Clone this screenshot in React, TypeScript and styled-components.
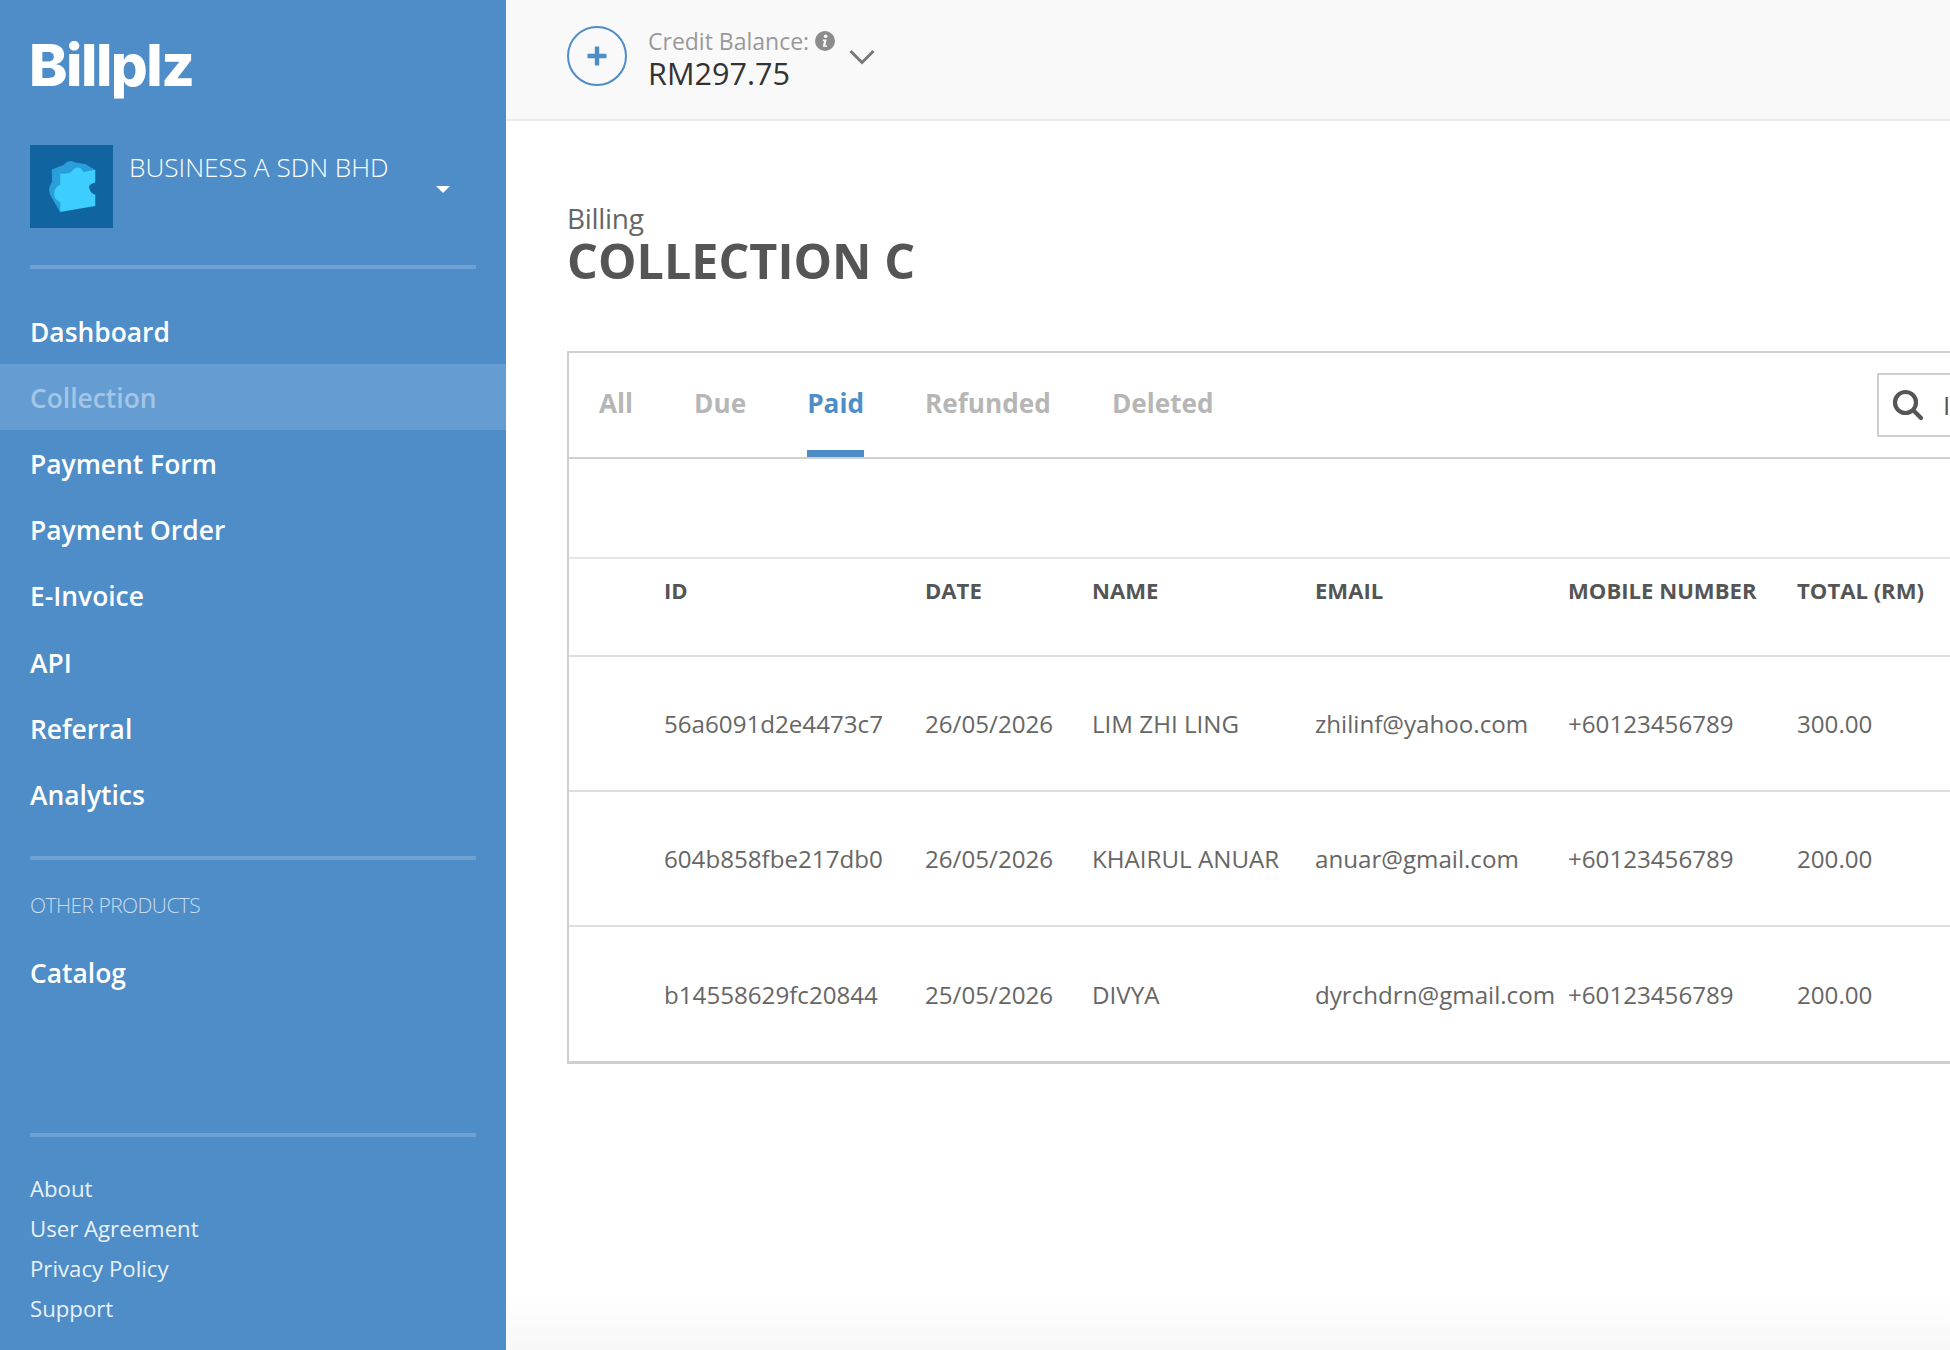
import React from "react";
import styled, { createGlobalStyle } from "styled-components";

const Global = createGlobalStyle`
  html, body { margin: 0; padding: 0; height: 1350px; overflow: hidden; background: #fff; }
  body { font-family: "Open Sans", "Noto Sans", sans-serif; }
  #root { height: 1350px; }
`;

const Page = styled.div`
  display: flex;
  width: 1950px;
  height: 1350px;
  overflow: hidden;
`;

const Sidebar = styled.aside`
  flex: 0 0 506px;
  height: 1350px;
  background: #4e8dc7;
  display: flex;
  flex-direction: column;
  color: #fff;
`;

const LogoRow = styled.div`
  height: 145px;
  padding: 27px 0 0 29px;
  box-sizing: border-box;
`;

const Logo = styled.div`
  font-family: "Inter", sans-serif;
  font-weight: 800;
  font-size: 58px;
  line-height: 76px;
  letter-spacing: -1.5px;
  color: #fff;
`;

const Account = styled.div`
  display: flex;
  height: 83px;
  padding: 0 30px;
  position: relative;
`;

const Avatar = styled.div`
  flex: 0 0 83px;
  height: 83px;
  background: #10649f;
`;

const AccountName = styled.div`
  margin: 8px 0 0 16px;
  font-size: 26.2px;
  line-height: 28px;
  font-weight: 300;
`;

const Caret = styled.div`
  position: absolute;
  left: 436px;
  top: 41px;
  width: 0;
  height: 0;
  border-left: 7.5px solid transparent;
  border-right: 7.5px solid transparent;
  border-top: 7px solid #fff;
`;

const Divider = styled.div<{ $top: number }>`
  height: 4px;
  margin: ${(p) => p.$top}px 30px 0;
  background: #6ea2d5;
  flex: none;
`;

const Nav = styled.nav<{ $top: number }>`
  margin-top: ${(p) => p.$top}px;
  display: flex;
  flex-direction: column;
`;

const NavItem = styled.a<{ $active?: boolean }>`
  height: 66.2px;
  box-sizing: border-box;
  display: flex;
  align-items: center;
  padding: 1px 0 0 30px;
  font-size: 26.4px;
  font-weight: 600;
  color: ${(p) => (p.$active ? "#a3c6e6" : "#fff")};
  background: ${(p) => (p.$active ? "#659dd2" : "transparent")};
`;

const SectionLabel = styled.div`
  margin: 31px 0 0 30px;
  font-size: 21px;
  line-height: 28px;
  font-weight: 300;
  letter-spacing: -0.55px;
  color: #c6dcf0;
`;

const Footer = styled.div`
  margin-top: auto;
  padding-bottom: 21px;
`;

const FooterLinks = styled.div`
  margin-top: 31px;
  display: flex;
  flex-direction: column;
`;

const FooterLink = styled.a`
  height: 40.2px;
  display: flex;
  align-items: center;
  padding-left: 30px;
  font-size: 22.2px;
  font-weight: 400;
  color: #e8f1f9;
`;

const Main = styled.main`
  flex: 1;
  min-width: 0;
  height: 1350px;
  background: linear-gradient(to bottom, #fff 96%, #f7f7f7 100%);
  display: flex;
  flex-direction: column;
`;

const TopBar = styled.header`
  flex: none;
  height: 119px;
  background: #f9f9f9;
  border-bottom: 2px solid #ececec;
  display: flex;
  align-items: center;
  padding-left: 61px;
`;

const AddButton = styled.div`
  width: 60px;
  height: 60px;
  box-sizing: border-box;
  border: 2px solid #4e8dc7;
  border-radius: 50%;
  display: flex;
  align-items: center;
  justify-content: center;
  color: #4e8dc7;
  margin-top: -8px;
`;

const Balance = styled.div`
  margin: 0 0 0 21px;
  display: flex;
  flex-direction: column;
`;

const BalanceLabel = styled.div`
  display: flex;
  align-items: center;
  gap: 6px;
  font-size: 23px;
  line-height: 28px;
  color: #999;
`;

const BalanceValue = styled.div`
  font-size: 30.6px;
  line-height: 37px;
  font-weight: 500;
  color: #333;
`;

const Chevron = styled.svg`
  margin: -6px 0 0 14px;
`;

const Content = styled.div`
  padding: 0 0 0 61px;
  flex: 1;
  min-height: 0;
`;

const Crumb = styled.div`
  margin-top: 78px;
  font-size: 28px;
  line-height: 38px;
  color: #666;
  letter-spacing: -0.3px;
`;

const Title = styled.h1`
  margin: -8px 0 0;
  font-size: 48.5px;
  line-height: 62px;
  font-weight: 700;
  color: #555;
`;

const Card = styled.section`
  margin-top: 60px;
  width: 1500px;
  box-sizing: border-box;
  border: 2px solid #cfcfcf;
  border-bottom-width: 3px;
  border-right: none;
`;

const TabBar = styled.div`
  height: 104px;
  border-bottom: 2px solid #d0d0d0;
  display: flex;
  padding-left: 30px;
  gap: 61px;
  position: relative;
`;

const Tab = styled.a<{ $active?: boolean }>`
  height: 104px;
  box-sizing: border-box;
  display: flex;
  align-items: center;
  padding-bottom: 4px;
  font-size: 26.2px;
  font-weight: 700;
  color: ${(p) => (p.$active ? "#4e8dc7" : "#b6b6b6")};
  box-shadow: ${(p) => (p.$active ? "inset 0 -7px 0 #4e8dc7" : "none")};
`;

const SearchBox = styled.div`
  position: absolute;
  left: 1308px;
  top: 20px;
  width: 180px;
  height: 64px;
  box-sizing: border-box;
  border: 2px solid #cfcfcf;
  display: flex;
  align-items: center;
  padding-left: 13px;
  gap: 19px;
  font-size: 26px;
`;

const SearchText = styled.span`
  color: #555;
`;

const Spacer = styled.div`
  height: 98px;
  border-bottom: 2px solid #e6e6e6;
`;

const Row = styled.div<{ $height: number; $head?: boolean }>`
  display: grid;
  grid-template-columns: 95px 261px 167px 223px 253px 229px 1fr;
  align-items: center;
  height: ${(p) => p.$height}px;
  box-sizing: border-box;
  padding-bottom: ${(p) => (p.$head ? "34px" : "0")};
  border-bottom: 2px solid #dedede;
  font-size: ${(p) => (p.$head ? "22.1px" : "24.15px")};
  font-weight: ${(p) => (p.$head ? 700 : 400)};
  color: ${(p) => (p.$head ? "#555" : "#666")};
  &:last-child { border-bottom: none; height: ${(p) => p.$height - 1}px; }
`;

const Cell = styled.div`
  white-space: nowrap;
`;

const Puzzle = () => (
  <svg width="83" height="83" viewBox="0 0 248 248">
    <path
      d="M65 73 L100 60 Q118 40 135 52 L165 57 L195 75 L90 90 V200 L66 160 Q48 135 66 110 Z"
      fill="#2a9edb"
    />
    <path
      d="M90 85 Q118 88 125 78 Q145 55 160 80 L195 74 V112 Q170 118 178 132 Q182 145 195 148 V182 L90 200 V170 Q64 160 76 130 Q82 122 90 118 Z"
      fill="#3dcdff"
    />
  </svg>
);

const Plus = () => (
  <svg width="22" height="22" viewBox="0 0 22 22">
    <path d="M11 1.5V20.5M1.5 11H20.5" stroke="currentColor" strokeWidth="4.4" />
  </svg>
);

const Info = () => (
  <svg width="20" height="20" viewBox="0 0 20 20">
    <circle cx="10" cy="10" r="10" fill="#8c8c8c" />
    <circle cx="10.6" cy="5.2" r="1.8" fill="#fff" />
    <path d="M7.8 8.6H11.6L10.4 14.4H12V15.8H7.8L9 10H7.8Z" fill="#fff" />
  </svg>
);

const Search = () => (
  <svg width="32" height="32" viewBox="0 0 32 32" fill="none" stroke="#555" strokeWidth="4.2" strokeLinecap="round">
    <circle cx="13.5" cy="13.5" r="10.5" />
    <path d="M21.5 21.5L29 29" />
  </svg>
);

const rows = [
  ["56a6091d2e4473c7", "26/05/2026", "LIM ZHI LING", "zhilinf@yahoo.com", "+60123456789", "300.00"],
  ["604b858fbe217db0", "26/05/2026", "KHAIRUL ANUAR", "anuar@gmail.com", "+60123456789", "200.00"],
  ["b14558629fc20844", "25/05/2026", "DIVYA", "dyrchdrn@gmail.com", "+60123456789", "200.00"],
];

const navItems = ["Dashboard", "Collection", "Payment Form", "Payment Order", "E-Invoice", "API", "Referral", "Analytics"];
const footerLinks = ["About", "User Agreement", "Privacy Policy", "Support"];
const tabs = ["All", "Due", "Paid", "Refunded", "Deleted"];
const heads = ["ID", "DATE", "NAME", "EMAIL", "MOBILE NUMBER", "TOTAL (RM)"];

export default function App() {
  return (
    <Page>
      <Global />
      <Sidebar>
        <LogoRow>
          <Logo>Billplz</Logo>
        </LogoRow>
        <Account>
          <Avatar>
            <Puzzle />
          </Avatar>
          <AccountName>BUSINESS A SDN BHD</AccountName>
          <Caret />
        </Account>
        <Divider $top={37} />
        <Nav $top={29}>
          {navItems.map((n) => (
            <NavItem key={n} $active={n === "Collection"}>
              {n}
            </NavItem>
          ))}
        </Nav>
        <Divider $top={28} />
        <SectionLabel>OTHER PRODUCTS</SectionLabel>
        <Nav $top={21}>
          <NavItem>Catalog</NavItem>
        </Nav>
        <Footer>
          <Divider $top={0} />
          <FooterLinks>
            {footerLinks.map((l) => (
              <FooterLink key={l}>{l}</FooterLink>
            ))}
          </FooterLinks>
        </Footer>
      </Sidebar>
      <Main>
        <TopBar>
          <AddButton>
            <Plus />
          </AddButton>
          <Balance>
            <BalanceLabel>
              Credit Balance: <Info />
            </BalanceLabel>
            <BalanceValue>RM297.75</BalanceValue>
          </Balance>
          <Chevron width="26" height="16" viewBox="0 0 26 16" fill="none" stroke="#777" strokeWidth="3">
            <path d="M1.5 2L13 13.5L24.5 2" />
          </Chevron>
        </TopBar>
        <Content>
          <Crumb>Billing</Crumb>
          <Title>COLLECTION C</Title>
          <Card>
            <TabBar>
              {tabs.map((t) => (
                <Tab key={t} $active={t === "Paid"}>
                  {t}
                </Tab>
              ))}
              <SearchBox>
                <Search />
                <SearchText>I</SearchText>
              </SearchBox>
            </TabBar>
            <Spacer />
            <Row $height={98} $head>
              <span />
              {heads.map((h) => (
                <Cell key={h}>{h}</Cell>
              ))}
            </Row>
            {rows.map((r) => (
              <Row key={r[0]} $height={135}>
                <span />
                {r.map((c, i) => (
                  <Cell key={i}>{c}</Cell>
                ))}
              </Row>
            ))}
          </Card>
        </Content>
      </Main>
    </Page>
  );
}
